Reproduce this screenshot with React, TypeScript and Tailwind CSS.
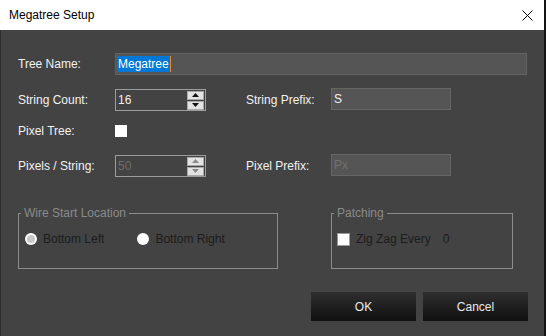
import React from "react";

const font = { fontFamily: '"Liberation Sans", Arial, sans-serif' };

function Spin({ value, disabled }: { value: string; disabled?: boolean }) {
  return (
    <div className="flex h-[22px] w-[91px] items-center border border-[#9c9c9c] bg-[#434343] pl-[1px] pr-[1px]">
      <span className={`flex-1 pl-[1px] text-[12px] leading-none ${disabled ? "text-[#6c6c6c]" : "text-[#f0f0f0]"}`}>{value}</span>
      <div className="flex flex-col gap-px">
        <div className="flex h-[9px] w-[17px] items-center justify-center border border-[#a8a8a8] bg-[#e3e3e3]">
          <svg width="7" height="4" viewBox="0 0 7 4"><path d="M3.5 0 L7 4 L0 4 Z" fill={disabled ? "#8a8a8a" : "#111"} /></svg>
        </div>
        <div className="flex h-[9px] w-[17px] items-center justify-center border border-[#a8a8a8] bg-[#e3e3e3]">
          <svg width="7" height="4" viewBox="0 0 7 4"><path d="M0 0 L7 0 L3.5 4 Z" fill={disabled ? "#8a8a8a" : "#111"} /></svg>
        </div>
      </div>
    </div>
  );
}

export default function App() {
  return (
    <div className="flex h-[336px] w-[546px] flex-col overflow-hidden bg-[#141414] text-[12px]" style={font}>
      <div className="flex h-[336px] w-[544px] flex-col">
        <div className="flex h-[30px] items-center justify-between bg-white pl-[9px] pr-[12px]">
          <span className="text-[12px] text-black">Megatree Setup</span>
          <svg width="11" height="11" viewBox="0 0 11 11" className="mr-[-1px]">
            <path d="M0.5 0.5 L10.5 10.5 M10.5 0.5 L0.5 10.5" stroke="#000" strokeWidth="1" />
          </svg>
        </div>
        <div className="flex flex-1 flex-col border-l border-[#2e2e2e] bg-[#434343] pl-[17px] pr-[16px] pt-[23px] text-[#f2f2f2]">
          <div className="flex h-[22px] items-center">
            <span className="w-[97px]">Tree Name:</span>
            <div className="flex h-[22px] w-[412px] items-center border border-[#626262] bg-[#555555] pl-[1px]">
              <span className="flex h-[16px] items-center bg-[#0078d7] px-[1px] text-white">Megatree</span>
              <span className="h-[16px] w-px bg-[#f08a24]" />
            </div>
          </div>
          <div className="mt-[14px] flex h-[22px] items-center">
            <span className="w-[97px]">String Count:</span>
            <Spin value="16" />
            <span className="ml-[40px] w-[85px]">String Prefix:</span>
            <div className="-mt-[2px] flex h-[22px] w-[120px] items-center border border-[#656565] bg-[#555555] pl-[2px]">S</div>
          </div>
          <div className="mt-[9px] flex h-[22px] items-center">
            <span className="w-[97px]">Pixel Tree:</span>
            <div className="h-[12px] w-[12px] bg-white" />
          </div>
          <div className="mt-[13px] flex h-[22px] items-center">
            <span className="w-[97px]">Pixels / String:</span>
            <Spin value="50" disabled />
            <span className="ml-[40px] w-[85px]">Pixel Prefix:</span>
            <div className="-mt-[2px] flex h-[22px] w-[120px] items-center border border-[#656565] bg-[#555555] pl-[2px] text-[#707070]">Px</div>
          </div>
          <div className="mt-[28px] flex items-start">
            <fieldset className="h-[64px] w-[260px] border border-[#8c8c8c] pl-[2px]">
              <legend className="px-[3px] leading-[16px] text-[#8a8a8a]">Wire Start Location</legend>
              <div className="ml-[4px] mt-[9px] flex items-center">
                <div className="flex h-[12px] w-[12px] items-center justify-center rounded-full bg-white">
                  <div className="h-[8px] w-[8px] rounded-full bg-[#c8c8c8]" />
                </div>
                <span className="ml-[6px] text-[#1c1c1c]">Bottom Left</span>
                <div className="ml-[33px] h-[12px] w-[12px] rounded-full bg-white" />
                <span className="ml-[6px] text-[#1c1c1c]">Bottom Right</span>
              </div>
            </fieldset>
            <fieldset className="ml-[53px] h-[64px] w-[182px] border border-[#8c8c8c] pl-[2px]">
              <legend className="px-[3px] leading-[16px] text-[#8a8a8a]">Patching</legend>
              <div className="ml-[3px] mt-[9px] flex items-center">
                <div className="h-[13px] w-[13px] border border-[#9a9a9a] bg-white" />
                <span className="ml-[6px] text-[#1c1c1c]">Zig Zag Every</span>
                <span className="ml-[12px] text-[#1c1c1c]">0</span>
              </div>
            </fieldset>
          </div>
          <div className="mt-[23px] flex justify-end gap-[7px]">
            <button className="h-[29px] w-[105px] bg-gradient-to-b from-[#2f2f2f] to-[#101010] text-[12px] text-[#eaeaea]">OK</button>
            <button className="h-[29px] w-[105px] bg-gradient-to-b from-[#2f2f2f] to-[#101010] text-[12px] text-[#eaeaea]">Cancel</button>
          </div>
        </div>
      </div>
    </div>
  );
}
